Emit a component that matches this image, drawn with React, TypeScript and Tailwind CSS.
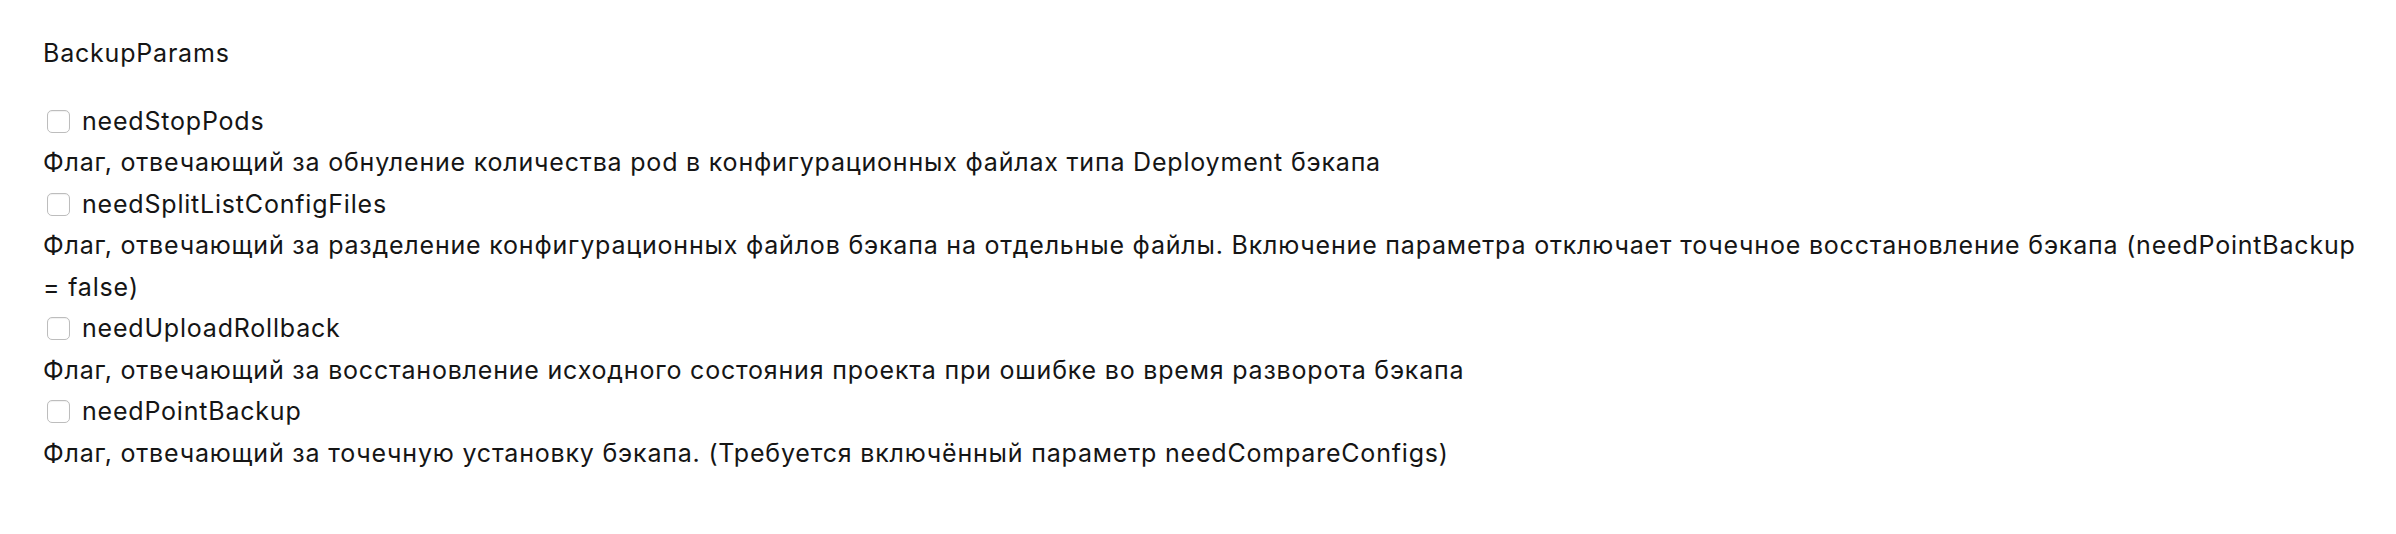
import React from "react";

const items = [
  {
    name: "needStopPods",
    desc: "Флаг, отвечающий за обнуление количества pod в конфигурационных файлах типа Deployment бэкапа",
  },
  {
    name: "needSplitListConfigFiles",
    desc: "Флаг, отвечающий за разделение конфигурационных файлов бэкапа на отдельные файлы. Включение параметра отключает точечное восстановление бэкапа (needPointBackup = false)",
  },
  {
    name: "needUploadRollback",
    desc: "Флаг, отвечающий за восстановление исходного состояния проекта при ошибке во время разворота бэкапа",
  },
  {
    name: "needPointBackup",
    desc: "Флаг, отвечающий за точечную установку бэкапа. (Требуется включённый параметр needCompareConfigs)",
  },
];

export default function App() {
  return (
    <div className="min-h-[534px] w-full bg-white pl-[43px] pr-[30px] pt-[33px] pb-[40px] font-['Inter','Noto_Sans',sans-serif] text-[25px] leading-[41.5px] tracking-[0.8px] text-[#151515]">
      <div className="mb-[26px]">BackupParams</div>
      <div className="flex flex-col">
        {items.map((it) => (
          <div key={it.name} className="flex flex-col">
            <label className="flex items-center">
              <span className="ml-[4px] inline-block h-[23px] w-[23px] rounded-[5px] border border-[#bdbdbd] bg-white shadow-[inset_0_1px_1px_rgba(0,0,0,0.06)]" />
              <span className="ml-[12px]">{it.name}</span>
            </label>
            <div>{it.desc}</div>
          </div>
        ))}
      </div>
    </div>
  );
}
